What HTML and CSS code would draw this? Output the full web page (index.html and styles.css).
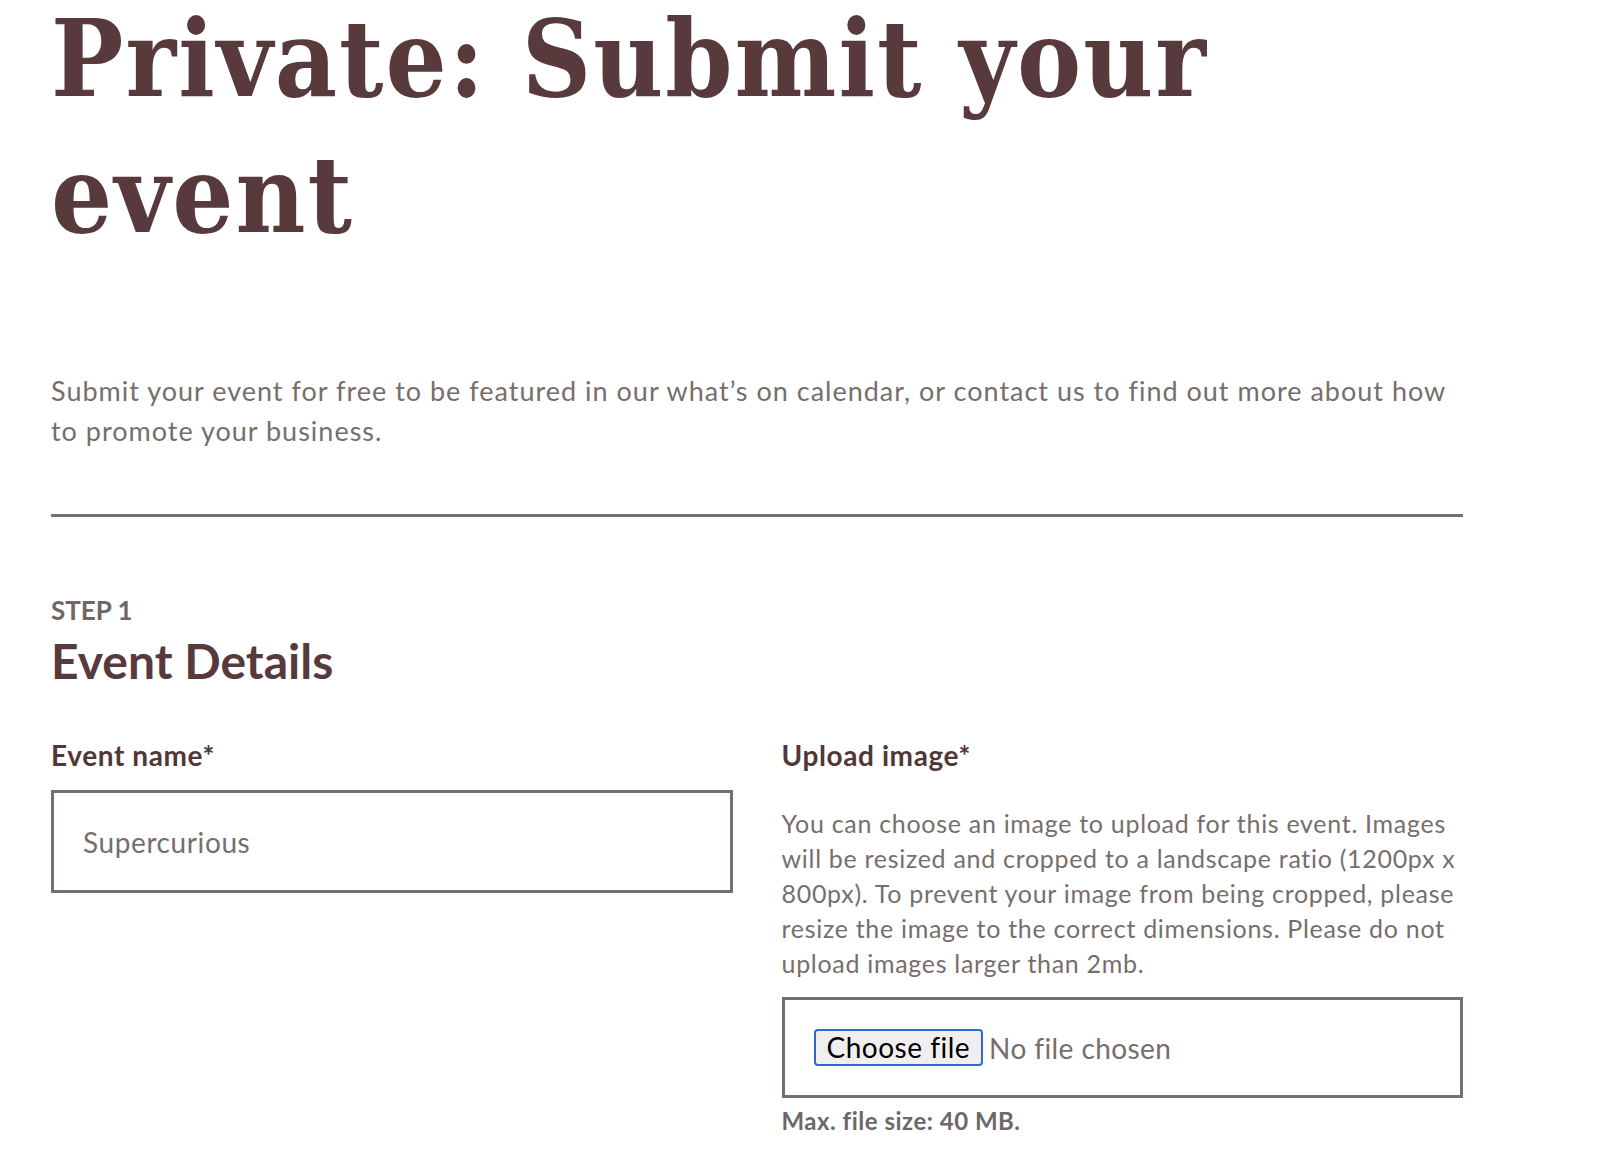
FILE: index.html
```html
<!DOCTYPE html>
<html lang="en">
<head>
<meta charset="utf-8">
<title>Private: Submit your event</title>
<link rel="stylesheet" href="styles.css">
</head>
<body>
<main class="page">
  <h1 class="title">Private: Submit your event</h1>
  <p class="intro">Submit your event for free to be featured in our what’s on calendar, or contact us to find out more about how to promote your business.</p>
  <hr class="rule">
  <section class="step">
    <div class="step-label">STEP 1</div>
    <h2 class="step-title">Event Details</h2>
    <div class="fields">
      <div class="field">
        <label class="field-label">Event name*</label>
        <div class="text-input">Supercurious</div>
      </div>
      <div class="field">
        <label class="field-label">Upload image*</label>
        <p class="field-desc">You can choose an image to upload for this event. Images will be resized and cropped to a landscape ratio (1200px x 800px). To prevent your image from being cropped, please resize the image to the correct dimensions. Please do not upload images larger than 2mb.</p>
        <div class="file-input">
          <button class="file-btn" type="button">Choose file</button>
          <span class="file-status">No file chosen</span>
        </div>
        <div class="file-note">Max. file size: 40 MB.</div>
      </div>
    </div>
  </section>
</main>
</body>
</html>
```

FILE: styles.css
```css
* { box-sizing: border-box; }
html, body { margin: 0; padding: 0; background: #ffffff; }
body { font-family: Lato, "Noto Sans", sans-serif; color: #776e6c; }
.page { width: 1412px; margin-left: 51px; }
.title {
  margin: -9px 0 0 0;
  font-family: "DejaVu Serif", serif;
  font-stretch: condensed;
  font-weight: 700;
  font-size: 107px;
  line-height: 136px;
  color: #583a3d;
  letter-spacing: 2px;
}
.intro {
  margin: 108px 0 0 0;
  font-size: 27px;
  letter-spacing: 1px;
  line-height: 40px;
  color: #776e6c;
}
.rule {
  margin: 63px 0 0 0;
  border: 0;
  height: 3px;
  background: #776f6d;
}
.step { margin-top: 78px; }
.step-label {
  font-size: 26px;
  font-weight: 700;
  color: #6f6766;
  line-height: 30px;
}
.step-title {
  margin: 8px 0 0 0;
  font-size: 48px;
  font-weight: 700;
  line-height: 56px;
  color: #583a3d;
}
.fields {
  display: grid;
  grid-template-columns: 1fr 1fr;
  column-gap: 49px;
  margin-top: 50px;
}
.field-label {
  display: block;
  font-size: 28px;
  letter-spacing: 0.6px;
  font-weight: 700;
  line-height: 32px;
  color: #523739;
}
.text-input {
  margin-top: 19px;
  height: 103px;
  border: 3px solid #776f6d;
  padding: 0 29px;
  display: flex;
  align-items: center;
  font-size: 28px;
  letter-spacing: 0.6px;
  color: #776e6c;
}
.field-desc {
  margin: 35px 0 0 0;
  font-size: 25px;
  letter-spacing: 0.7px;
  line-height: 35px;
  color: #776e6c;
}
.file-input {
  margin-top: 16px;
  height: 101px;
  border: 3px solid #776f6d;
  padding: 0 29px;
  display: flex;
  align-items: center;
  gap: 6px;
}
.file-btn {
  font-family: Lato, "Noto Sans", sans-serif;
  font-size: 28px;
  letter-spacing: 0.5px;
  color: #000;
  background: #efefef;
  border: 2px solid #2f66d6;
  border-radius: 4px;
  padding: 0 11px;
  height: 37px;
  line-height: 31px;
}
.file-status { font-size: 28px; letter-spacing: 0.4px; color: #776e6c; }
.file-note {
  margin-top: 8px;
  font-size: 24px;
  letter-spacing: 0.5px;
  font-weight: 700;
  color: #6f6766;
}
```
